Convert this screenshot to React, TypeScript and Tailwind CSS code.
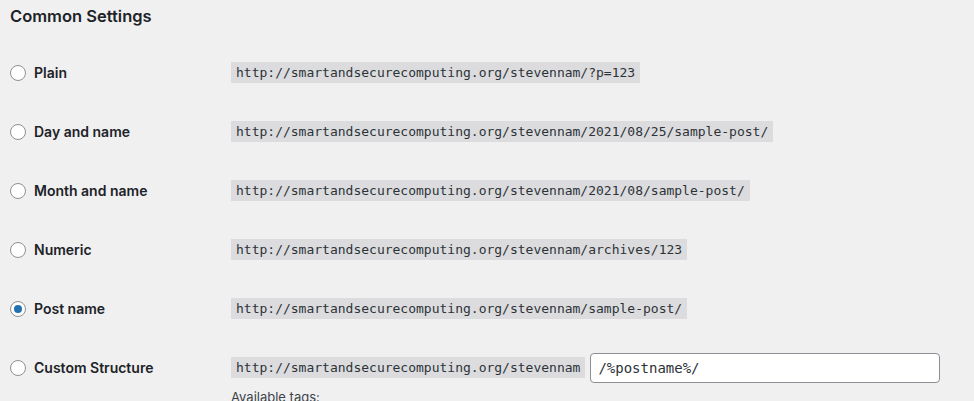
import React from "react";

const rows = [
  { label: "Plain", url: "http://smartandsecurecomputing.org/stevennam/?p=123", checked: false },
  { label: "Day and name", url: "http://smartandsecurecomputing.org/stevennam/2021/08/25/sample-post/", checked: false },
  { label: "Month and name", url: "http://smartandsecurecomputing.org/stevennam/2021/08/sample-post/", checked: false },
  { label: "Numeric", url: "http://smartandsecurecomputing.org/stevennam/archives/123", checked: false },
  { label: "Post name", url: "http://smartandsecurecomputing.org/stevennam/sample-post/", checked: true },
];

function Radio({ checked }: { checked: boolean }) {
  return (
    <span className="w-4 h-4 rounded-full border border-[#8c8f94] bg-white flex items-center justify-center shrink-0">
      {checked && <span className="w-2 h-2 rounded-full bg-[#2271b1]" />}
    </span>
  );
}

function Code({ children }: { children: React.ReactNode }) {
  return (
    <code
      className="h-[21px] flex items-center px-[5px] bg-[#dcdcde] text-[13px] text-[#2c3338] whitespace-nowrap"
      style={{ fontFamily: '"DejaVu Sans Mono", monospace' }}
    >
      {children}
    </code>
  );
}

export default function App() {
  return (
    <div
      className="w-[974px] h-[401px] overflow-hidden bg-[#f0f0f1] pl-[10px] text-[#1d2327]"
      style={{ fontFamily: 'Inter, "Noto Sans", sans-serif' }}
    >
      <h2 className="mt-[5px] h-[22px] leading-[22px] text-[16.5px] font-semibold text-[#1d2327]">Common Settings</h2>
      <div className="mt-[16px]">
        {rows.map((r) => (
          <div key={r.label} className="flex items-start py-[15px]">
            <div className="w-[221px] h-[29px] flex items-center gap-2 shrink-0">
              <Radio checked={r.checked} />
              <span className="text-[14px] font-semibold">{r.label}</span>
            </div>
            <div className="h-[29px] flex items-center">
              <Code>{r.url}</Code>
            </div>
          </div>
        ))}
        <div className="flex items-start py-[15px]">
          <div className="w-[221px] h-[29px] flex items-center gap-2 shrink-0">
            <Radio checked={false} />
            <span className="text-[14px] font-semibold">Custom Structure</span>
          </div>
          <div className="flex flex-col">
            <div className="h-[29px] flex items-center gap-[5px]">
              <Code>http://smartandsecurecomputing.org/stevennam</Code>
              <input
                readOnly
                value="/%postname%/"
                className="w-[350px] h-[30px] bg-white border border-[#8c8f94] rounded-[4px] px-[7px] text-[14px] text-[#2c3338] outline-none"
                style={{ fontFamily: '"DejaVu Sans Mono", monospace' }}
              />
            </div>
            <div className="mt-[6px] text-[13px] leading-[18px] text-[#3c434a]">Available tags:</div>
          </div>
        </div>
      </div>
    </div>
  );
}
